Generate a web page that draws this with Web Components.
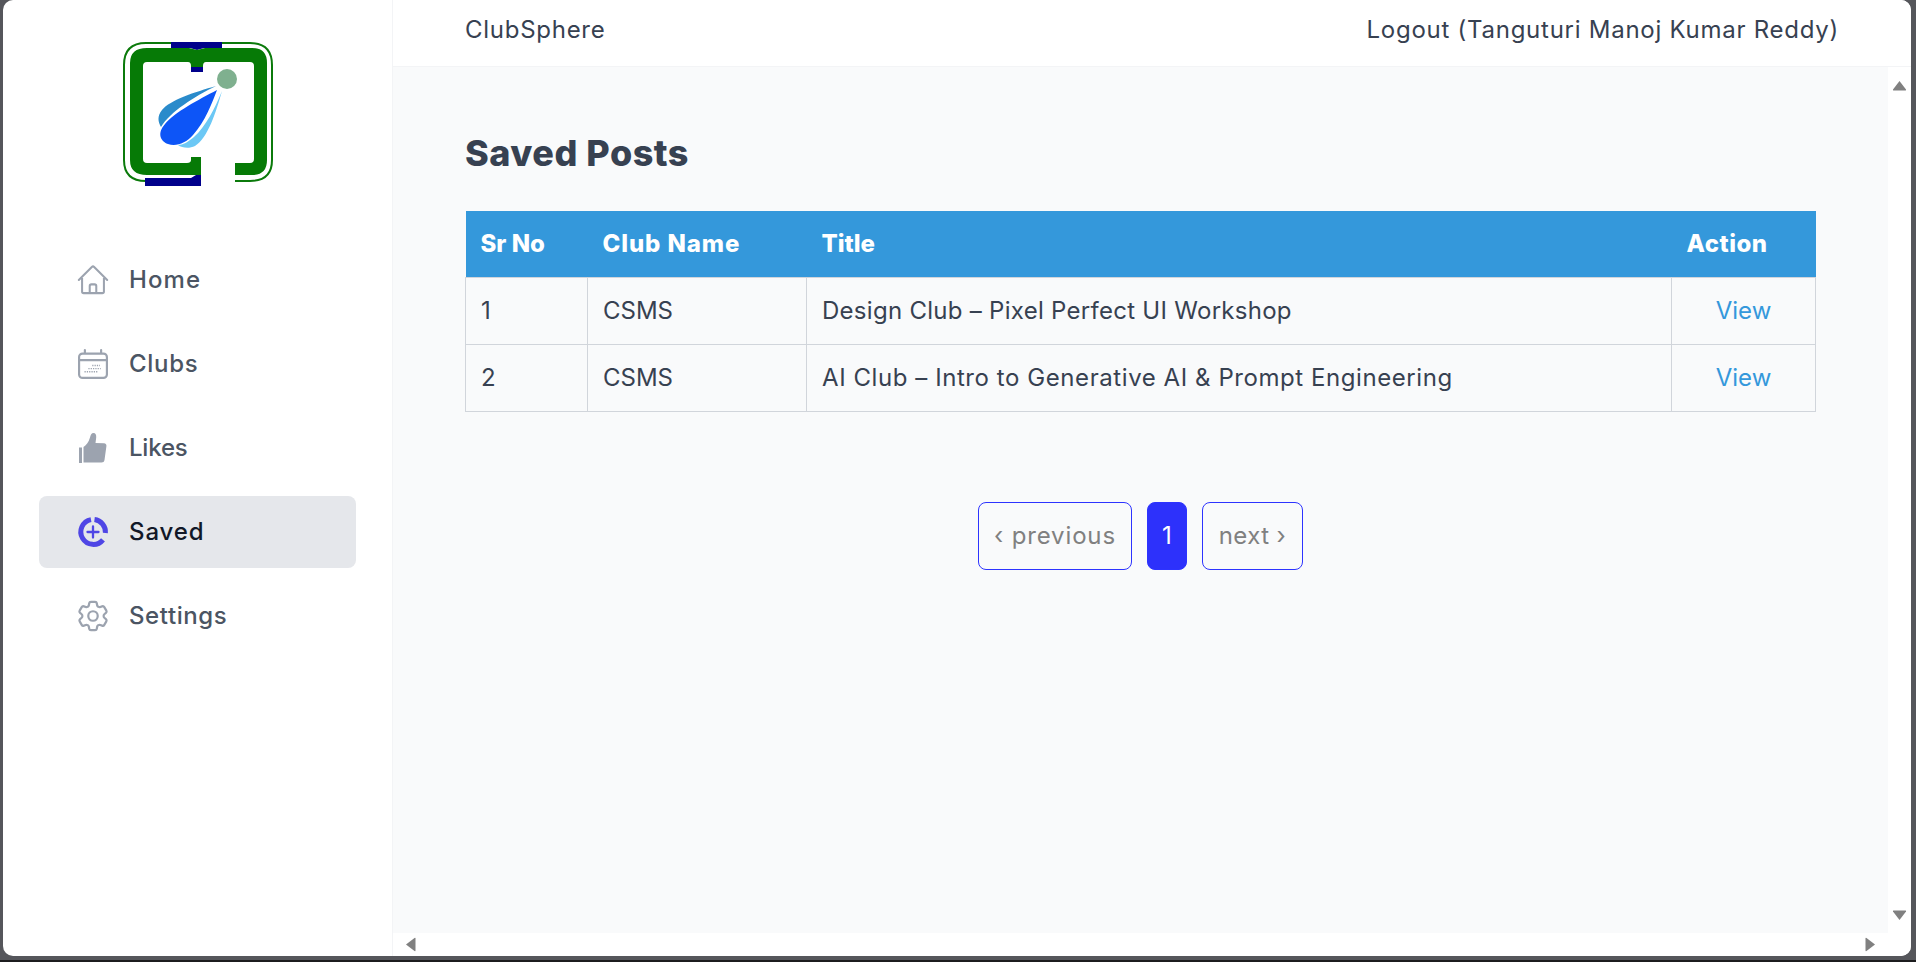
<!DOCTYPE html>
<html lang="en">
<head>
<meta charset="utf-8">
<title>ClubSphere</title>
<style>
  html, body { margin: 0; height: 100%; }
  body { background: #55565b; font-family: Inter, "Noto Sans", sans-serif; overflow: hidden; }
</style>
</head>
<body>
<club-app>
  <side-bar slot="side">
    <nav-item label="Home" icon="home" style="--ls:1.1px"></nav-item>
    <nav-item label="Clubs" icon="calendar" style="--ls:.7px"></nav-item>
    <nav-item label="Likes" icon="thumb" style="--ls:-.2px"></nav-item>
    <nav-item label="Saved" icon="saved" style="--ls:.9px" active></nav-item>
    <nav-item label="Settings" icon="gear" style="--ls:.6px"></nav-item>
  </side-bar>
  <top-bar slot="top" brand="ClubSphere" user="Logout (Tanguturi Manoj Kumar Reddy)"></top-bar>
  <scroll-pane slot="main">
    <saved-posts></saved-posts>
  </scroll-pane>
</club-app>

<script>
const ICONS = {
  home: `<svg viewBox="1.7 2 20.6 20" fill="none" stroke="#9ca3af" stroke-width="1.4" stroke-linecap="round" stroke-linejoin="round"><path d="M2.25 12l8.954-8.955c.44-.439 1.152-.439 1.591 0L21.75 12M4.5 9.75v10.125c0 .621.504 1.125 1.125 1.125H9.750v-4.875c0-.621.504-1.125 1.125-1.125h2.250c.621 0 1.125.504 1.125 1.125V21h4.125c.621 0 1.125-.504 1.125-1.125V9.750M8.250 21h8.250"/></svg>`,
  calendar: `<svg viewBox="2.300 2.300 19.400 19.400" fill="none" stroke="#9ca3af" stroke-width="1.4" stroke-linecap="round" stroke-linejoin="round"><path d="M6.750 3v2.250M17.250 3v2.250M3 18.750V7.500a2.250 2.250 0 012.250-2.250h13.500A2.250 2.250 0 0121 7.500v11.250A2.250 2.250 0 0118.750 21H5.250A2.250 2.250 0 013 18.750zM3 9.500h18"/><path stroke-width=".9" stroke-dasharray=".8 .7" stroke-linecap="butt" d="M11.500 13h5M9 15h8M6.500 17h9"/></svg>`,
  thumb: `<svg viewBox="0 0 30 30" fill="#9ca3af"><path d="M1 14.500h3V30H1zM5.500 29.500V14c2.500-1.500 5-4.500 6.500-9.500.6-2.500 1.500-4.500 3.500-4.500 2 0 3 1.800 2.700 4.500l-.7 5.500 8.500.3c1.700.1 2.700 1.300 2.400 3L26.500 27c-.3 1.700-1.300 2.500-3 2.500z"/></svg>`,
  saved: `<svg viewBox="0 0 30 30" fill="none" stroke="#4f46e5"><path stroke-width="5" d="M13 2.600A12.500 12.500 0 1 0 25 22.800"/><path stroke-width="5" d="M16.500 2.600A12.500 12.500 0 0 1 27.400 16"/><path stroke-width="2.300" stroke-linecap="round" d="M15 9.500v11M9.500 15h11"/></svg>`,
  gear: `<svg viewBox="2.500 2.500 19 19" fill="none" stroke="#9ca3af" stroke-width="1.400" stroke-linecap="round" stroke-linejoin="round"><path d="M9.594 3.940c.09-.542.56-.94 1.110-.94h2.593c.55 0 1.020.398 1.110.94l.213 1.281c.063.374.313.686.645.87.074.04.147.083.22.127.324.196.72.257 1.075.124l1.217-.456a1.125 1.125 0 011.370.49l1.296 2.247a1.125 1.125 0 01-.26 1.431l-1.003.827c-.293.24-.438.613-.431.992a6.759 6.759 0 010 .255c-.007.378.138.75.43.99l1.005.828c.424.35.534.954.26 1.430l-1.298 2.247a1.125 1.125 0 01-1.369.491l-1.217-.456c-.355-.133-.75-.072-1.076.124a6.570 6.570 0 01-.22.128c-.331.183-.581.495-.644.869l-.213 1.280c-.09.543-.56.941-1.110.941h-2.594c-.55 0-1.020-.398-1.110-.94l-.213-1.281c-.062-.374-.312-.686-.644-.87a6.520 6.520 0 01-.22-.127c-.325-.196-.72-.257-1.076-.124l-1.217.456a1.125 1.125 0 01-1.369-.49l-1.297-2.247a1.125 1.125 0 01.26-1.431l1.004-.827c.292-.24.437-.613.43-.992a6.932 6.932 0 010-.255c.007-.378-.138-.75-.43-.99l-1.004-.828a1.125 1.125 0 01-.26-1.430l1.297-2.247a1.125 1.125 0 011.370-.491l1.216.456c.356.133.751.072 1.076-.124.072-.044.146-.087.22-.128.332-.183.582-.495.644-.869l.214-1.281z"/><circle cx="12" cy="12" r="3"/></svg>`
};

class ClubApp extends HTMLElement {
  constructor() {
    super();
    this.attachShadow({ mode: "open" }).innerHTML = `
      <style>
        :host { display: block; height: 100vh; box-sizing: border-box; padding: 0 5px 4px 3px; border-bottom: 2px solid #1c1c1e; }
        .win { height: 100%; display: flex; background: #fff; border-radius: 10px; overflow: hidden; }
        .side { display: block; width: 389px; flex: none; border-right: 1px solid #f3f4f6; }
        .col { flex: 1; min-width: 0; display: flex; flex-direction: column; }
      </style>
      <div class="win">
        <div class="side"><slot name="side"></slot></div>
        <div class="col">
          <slot name="top"></slot>
          <slot name="main"></slot>
        </div>
      </div>`;
  }
}

class SideBar extends HTMLElement {
  constructor() {
    super();
    this.attachShadow({ mode: "open" }).innerHTML = `
      <style>
        :host { display: block; }
        .logo { display: block; width: 175px; height: 165px; margin: 30px auto 49px; }
        nav { display: flex; flex-direction: column; gap: 12px; padding: 0 36px; }
      </style>
      <svg class="logo" viewBox="110 30 175 165">
        <path d="M176 43H146Q124 43 124 65V160Q124 181 146 181H200" fill="none" stroke="#0b7a0b" stroke-width="2"/>
        <path d="M218 43H250Q272 43 272 65V160Q272 181 250 181H235" fill="none" stroke="#0b7a0b" stroke-width="2"/>
        <path d="M171 42h51v6h-18l-7 2-7-2h-19z" fill="#00008b"/>
        <path d="M191 67h12v5h-12zM145 178h46l5-3h5v11h-56z" fill="#00008b"/>
        <path fill="#067a06" fill-rule="evenodd" d="M147 48H189l8 2 8-2h47Q267 48 267 63V160Q267 175 252 175H235V163H250Q254 163 254 159V66Q254 62 250 62H206Q203 62 203 66V67H191V66Q191 62 188 62H147Q143 62 143 66V159Q143 163 147 163H187Q191 163 191 160V157H201V175H147Q130 175 130 160V63Q130 48 147 48Z"/>
        <path d="M216 86C195 92 170 100 162 110 157 116 158 122 161 127 170 112 195 96 216 86Z" fill="#2a8bcb"/>
        <path d="M222 91C214 110 206 126 194 137 188 142 183 145 178 145 182 148 189 149 195 146 208 138 216 112 222 91Z" fill="#6cc8f5"/>
        <path d="M217 90C198 100 175 112 165 124 157 133 160 141 168 144 176 147 186 143 193 135 205 122 212 103 217 90Z" fill="#0d55f7"/>
        <circle cx="227" cy="79" r="10" fill="#7fb08f"/>
      </svg>
      <nav><slot></slot></nav>`;
  }
}

class NavItem extends HTMLElement {
  constructor() {
    super();
    const active = this.hasAttribute("active");
    this.attachShadow({ mode: "open" }).innerHTML = `
      <style>
        :host { display: flex; align-items: center; gap: 21px; height: 72px; padding-left: 39px; border-radius: 8px;
                font-size: 24px; font-weight: 500; color: ${active ? "#111827" : "#4b5563"}; background: ${active ? "#e5e7eb" : "transparent"}; }
        .icon { width: 30px; height: 30px; flex: none; }
        .txt { letter-spacing: var(--ls, 0); padding-bottom: 2px; }
        svg { display: block; width: 100%; height: 100%; overflow: visible; }
      </style>
      <span class="icon">${ICONS[this.getAttribute("icon")]}</span>
      <span class="txt">${this.getAttribute("label")}</span>`;
  }
}

class TopBar extends HTMLElement {
  constructor() {
    super();
    this.attachShadow({ mode: "open" }).innerHTML = `
      <style>
        :host { display: flex; flex: none; justify-content: space-between; align-items: center; height: 67px; box-sizing: border-box;
                padding: 0 72px 7px 72px; border-bottom: 1px solid #f3f4f6; font-size: 24px; color: #374151; background: #fff; }
        .brand { letter-spacing: .73px; }
        .user { letter-spacing: .74px; }
      </style>
      <span class="brand">${this.getAttribute("brand")}</span>
      <span class="user">${this.getAttribute("user")}</span>`;
  }
}

class ScrollPane extends HTMLElement {
  constructor() {
    super();
    this.attachShadow({ mode: "open" }).innerHTML = `
      <style>
        :host { display: grid; flex: 1; min-height: 0; grid-template: 1fr 23px / 1fr 23px; background: #fff; }
        .view { background: #f9fafb; overflow: hidden; }
        .v, .h { display: flex; justify-content: space-between; align-items: center; }
        .v { flex-direction: column; padding: 13px 0 12px; }
        .h { padding: 0 12px; }
        svg { display: block; fill: #808080; }
      </style>
      <div class="view"><slot></slot></div>
      <div class="v">
        <svg width="15" height="11" viewBox="0 0 15 11"><path d="M7.500 1L14 9.500Q14.500 10.500 13.500 10.500H1.500Q.5 10.500 1 9.500Z"/></svg>
        <svg width="15" height="11" viewBox="0 0 15 11"><path d="M7.500 10L14 1.500Q14.500 .5 13.500 .5H1.500Q.5 .5 1 1.500Z"/></svg>
      </div>
      <div class="h">
        <svg width="11" height="15" viewBox="0 0 11 15"><path d="M1 7.500L9.500 1Q10.500 .5 10.500 1.500V13.500Q10.500 14.500 9.500 14Z"/></svg>
        <svg width="11" height="15" viewBox="0 0 11 15"><path d="M10 7.500L1.500 1Q.5 .5 .5 1.500V13.500Q.5 14.500 1.500 14Z"/></svg>
      </div>
      <div></div>`;
  }
}

class SavedPosts extends HTMLElement {
  constructor() {
    super();
    const rows = [
      ["1", "CSMS", "Design Club – Pixel Perfect UI Workshop", ".28px"],
      ["2", "CSMS", "AI Club – Intro to Generative AI &amp; Prompt Engineering", ".57px"]
    ];
    this.attachShadow({ mode: "open" }).innerHTML = `
      <style>
        :host { display: block; padding: 59px 72px 0; color: #374151; }
        h1 { margin: 0 0 31px; font-size: 36px; line-height: 54px; font-weight: 800; letter-spacing: .5px; color: #374151; }
        table { width: 1350px; table-layout: fixed; border-collapse: collapse; font-size: 24px; }
        th { height: 66px; padding: 0 15px; background: #3498db; color: #fff; font-weight: 800; text-align: left; box-sizing: border-box; }
        td { height: 67px; padding: 0 15px; border: 1px solid #d1d5db; box-sizing: border-box; }
        .act { text-align: center; }
        td a { color: #3498db; text-decoration: none; }
        page-nav { margin-top: 90px; }
      </style>
      <h1>Saved Posts</h1>
      <table>
        <colgroup><col style="width:122px"><col style="width:219px"><col style="width:865px"><col style="width:144px"></colgroup>
        <thead><tr><th>Sr No</th><th style="letter-spacing:.9px">Club Name</th><th>Title</th><th style="letter-spacing:.5px">Action</th></tr></thead>
        <tbody>
          ${rows.map(r => `<tr><td>${r[0]}</td><td>${r[1]}</td><td style="letter-spacing:${r[3]}">${r[2]}</td><td class="act"><a href="#">View</a></td></tr>`).join("")}
        </tbody>
      </table>
      <page-nav></page-nav>`;
  }
}

class PageNav extends HTMLElement {
  constructor() {
    super();
    this.attachShadow({ mode: "open" }).innerHTML = `
      <style>
        :host { display: flex; justify-content: center; gap: 15px; font-size: 24px; color: #808080; }
        span { display: flex; align-items: center; justify-content: center; height: 68px; box-sizing: border-box;
               border: 1.5px solid #2d33ff; border-radius: 8px; }
        .prev { width: 154px; letter-spacing: .85px; }
        .next { width: 101px; letter-spacing: .4px; }
        .cur { width: 40px; background: #2d31fb; color: #fff; }
      </style>
      <span class="prev">‹ previous</span>
      <span class="cur">1</span>
      <span class="next">next ›</span>`;
  }
}

customElements.define("club-app", ClubApp);
customElements.define("side-bar", SideBar);
customElements.define("nav-item", NavItem);
customElements.define("top-bar", TopBar);
customElements.define("scroll-pane", ScrollPane);
customElements.define("saved-posts", SavedPosts);
customElements.define("page-nav", PageNav);
</script>
</body>
</html>
